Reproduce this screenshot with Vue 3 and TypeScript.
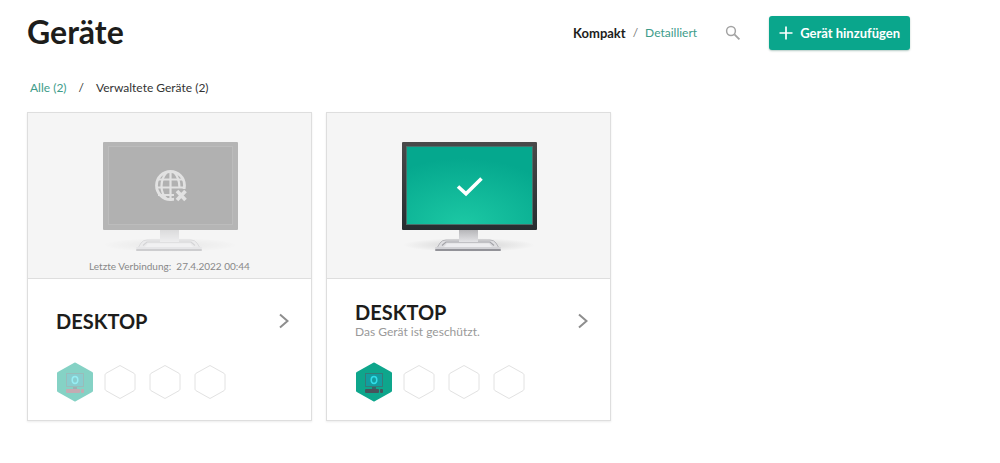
<script setup lang="ts">
import { ref } from 'vue'

interface Device {
  id: number
  name: string
  online: boolean
  status?: string
  lastSeen?: string
}

const devices: Device[] = [
  { id: 1, name: 'DESKTOP', online: false, lastSeen: '27.4.2022 00:44' },
  { id: 2, name: 'DESKTOP', online: true, status: 'Das Gerät ist geschützt.' },
]
const view = ref<'compact' | 'detailed'>('compact')
const emptySlots = 3
</script>

<template>
  <main class="page">
    <header class="header">
      <h1 class="title">Geräte</h1>
      <div class="tools">
        <div class="views">
          <button type="button" class="view" :class="{ active: view === 'compact' }" @click="view = 'compact'">Kompakt</button>
          <span class="slash">/</span>
          <button type="button" class="view" :class="{ active: view === 'detailed' }" @click="view = 'detailed'">Detailliert</button>
        </div>
        <button type="button" class="search" aria-label="Suchen">
          <svg width="16" height="16" viewBox="0 0 16 16" fill="none" stroke="#a3a3a3">
            <circle cx="6" cy="6" r="4.4" stroke-width="1.5" />
            <path d="M9.4 9.4L14.4 14.4" stroke-width="1.9" />
          </svg>
        </button>
        <button type="button" class="add">
          <svg width="14" height="14" viewBox="0 0 14 14" stroke="#fff" stroke-width="1.7">
            <path d="M7 0.5V13.5M0.5 7H13.5" />
          </svg>
          <span>Gerät hinzufügen</span>
        </button>
      </div>
    </header>

    <nav class="filters" aria-label="Filter">
      <a href="#all" class="filter current">Alle (2)</a>
      <span>/</span>
      <a href="#managed" class="filter">Verwaltete Geräte (2)</a>
    </nav>

    <section class="devices">
      <article v-for="device in devices" :key="device.id" class="card" :class="{ offline: !device.online }">
        <div class="preview">
          <svg class="monitor" width="160" height="116" viewBox="0 0 160 116" aria-hidden="true">
            <defs>
              <radialGradient :id="`screen-${device.id}`" cx="0.45" cy="1" r="0.85">
                <stop offset="0" stop-color="#1cc8a4" />
                <stop offset="1" stop-color="#05a88e" />
              </radialGradient>
              <linearGradient :id="`frame-${device.id}`" x1="0" y1="0" x2="0" y2="1">
                <stop offset="0" stop-color="#4a4a4a" />
                <stop offset="1" stop-color="#262d30" />
              </linearGradient>
              <linearGradient :id="`neck-${device.id}`" x1="0" y1="0" x2="0" y2="1">
                <stop offset="0" stop-color="#b2b2b5" />
                <stop offset="1" stop-color="#e4e4e7" />
              </linearGradient>
              <radialGradient :id="`shadow-${device.id}`">
                <stop offset="0" stop-color="#999" stop-opacity="0.4" />
                <stop offset="1" stop-color="#999" stop-opacity="0" />
              </radialGradient>
            </defs>
            <g :opacity="device.online ? 1 : 0.4">
              <ellipse cx="80" cy="104" rx="66" ry="7" :fill="`url(#shadow-${device.id})`" />
              <path d="M51 102Q53 99 57 99H101Q105 99 107 102L110 107H48Z" fill="#dedee1" stroke="#b4b4b8" />
              <path d="M53 104.5L57 101H101L105 104.5" fill="none" stroke="#a4a4a9" stroke-width="1.2" />
              <path d="M55 106L58 102.5H100L103 106Z" fill="#ededf0" />
              <rect x="46" y="106" width="66" height="2" rx="1" fill="#d2d2d6" />
              <rect x="46" y="108" width="66" height="2" rx="1" fill="#929298" />
              <rect x="70" y="88" width="19" height="13" :fill="`url(#neck-${device.id})`" />
            </g>
            <template v-if="device.online">
              <rect x="13" y="1" width="135" height="88" rx="1" :fill="`url(#frame-${device.id})`" />
              <rect x="17.5" y="5.5" width="126" height="78" :fill="`url(#screen-${device.id})`" stroke="#49706a" />
              <path d="M69 45.5L77 52.8L92.5 37.5" fill="none" stroke="#fff" stroke-width="3.6" />
            </template>
            <template v-else>
              <rect x="13" y="1" width="135" height="88" rx="1" fill="#b5b5b5" />
              <rect x="18.5" y="5.5" width="124" height="78" fill="#b1b1b1" stroke="#bcbcbc" />
              <g fill="none" stroke="#e2e2e2" stroke-width="2.8">
                <circle cx="80.5" cy="44.5" r="14" />
                <path d="M80.5 30V60M67 38.5H94M66 46.5H95M68 54H84" stroke-width="2.2" />
                <path d="M77 31Q71.5 37 71.5 45T77 58.5M84 31Q89.5 37 89.5 47" stroke-width="2.2" />
              </g>
              <path d="M84 48H99V62H84Z" fill="#b1b1b1" />
              <path d="M87 50L95.5 59M95.5 50L87 59" stroke="#e2e2e2" stroke-width="3.6" />
            </template>
          </svg>
          <p v-if="device.lastSeen" class="seen">Letzte Verbindung:&nbsp; {{ device.lastSeen }}</p>
        </div>

        <div class="body">
          <div class="info">
            <div>
              <h2 class="name">{{ device.name }}</h2>
              <p v-if="device.status" class="status">{{ device.status }}</p>
            </div>
            <button type="button" class="open" aria-label="Gerät öffnen">
              <svg width="10" height="16" viewBox="0 0 10 16" fill="none" stroke="#8e8e8e" stroke-width="2">
                <path d="M1 1.5L8.5 8L1 14.5" />
              </svg>
            </button>
          </div>
          <div class="apps">
            <svg class="app" width="38" height="40" viewBox="0 0 38 40" aria-hidden="true">
              <path d="M19 2L35.5 11.2V28.8L19 38L2.5 28.8V11.2Z" fill="#0ea68c" stroke="#0ea68c" stroke-width="3" stroke-linejoin="round" />
              <rect x="10.5" y="11.5" width="17" height="13" fill="#139d9f" stroke="#367b78" />
              <ellipse cx="19" cy="18" rx="2.8" ry="3.4" fill="none" stroke="#31dce8" stroke-width="1.5" />
              <path d="M17 25H21V27H17Z" fill="#34666b" />
              <rect x="10" y="27" width="14" height="4" rx="1" :fill="device.online ? '#47545c' : '#8a5a68'" />
              <rect x="25" y="27" width="3" height="4" rx="1" :fill="device.online ? '#47545c' : '#8a5a68'" />
            </svg>
            <svg v-for="n in emptySlots" :key="n" class="slot" width="32" height="36" viewBox="0 0 32 36" fill="none" stroke="#e2e2e2" aria-hidden="true">
              <path d="M16 1.5L30 9.3Q31 10 31 11V25Q31 26 30 26.7L16 34.5L2 26.7Q1 26 1 25V11Q1 10 2 9.3Z" />
            </svg>
          </div>
        </div>
      </article>
    </section>
  </main>
</template>

<style>
body {
  margin: 0;
  background: #fff;
}
</style>

<style scoped>
.page {
  padding: 16px 90px 40px 27px;
  font-family: Lato, "Open Sans", sans-serif;
  font-size: 12px;
  line-height: 16px;
  color: #333;
}
button {
  padding: 0;
  border: 0;
  background: none;
  font: inherit;
  color: inherit;
  cursor: pointer;
}
svg {
  display: block;
}
h1,
h2,
p {
  margin: 0;
}
.header,
.tools,
.views,
.filters,
.info,
.apps {
  display: flex;
  align-items: center;
}
.header {
  justify-content: space-between;
  align-items: flex-start;
}
.title {
  font-size: 32px;
  line-height: 32px;
  font-weight: 700;
  color: #1d1d1b;
}
.views {
  gap: 7px;
}
.view {
  color: #3d9c8a;
}
.view.active {
  font-size: 13px;
  font-weight: 700;
  color: #1d1d1b;
}
.slash {
  color: #777;
}
.search {
  margin: 0 28px;
}
.add {
  display: flex;
  align-items: center;
  gap: 7px;
  padding: 9px 10px;
  border-radius: 3px;
  background: #0aa68c;
  box-shadow: 0 1px 2px rgb(0 80 60 / 30%);
  color: #fff;
  font-size: 13px;
  font-weight: 700;
}
.filters {
  gap: 12px;
  margin: 30px 0 16px 3px;
}
.filter {
  color: #333;
  text-decoration: none;
}
.filter.current {
  color: #3d9c8a;
}
.devices {
  display: grid;
  grid-template-columns: repeat(3, 1fr);
  gap: 14px;
}
.card {
  border: 1px solid #dedede;
  box-shadow: 0 1px 2px rgb(0 0 0 / 8%);
}
.preview {
  display: flex;
  flex-direction: column;
  align-items: center;
  min-height: 137px;
  padding-top: 28px;
  border-bottom: 1px solid #dedede;
  background: #f5f5f5;
}
.seen {
  font-size: 10px;
  line-height: 18px;
  color: #888;
}
.body {
  padding: 0 22px 18px 28px;
}
.info {
  justify-content: space-between;
  height: 83px;
}
.name {
  font-size: 20px;
  line-height: 22px;
  font-weight: 700;
  color: #1d1d1b;
}
.status {
  line-height: 18px;
  color: #999;
}
.apps {
  gap: 13px;
}
.app {
  margin-right: -3px;
}
.offline .app {
  opacity: 0.5;
}
</style>
